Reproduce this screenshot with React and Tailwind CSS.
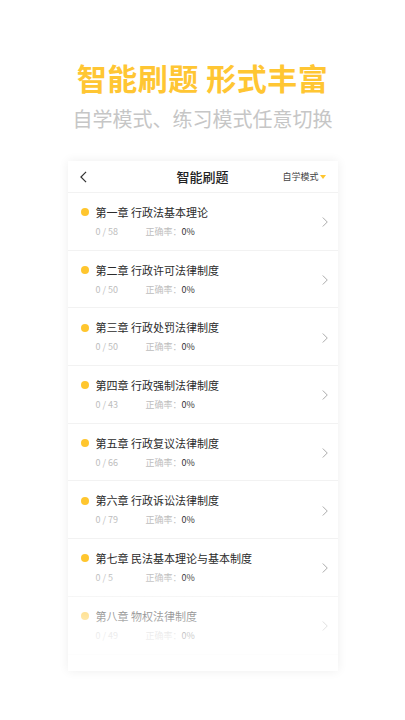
import React from 'react';

const chapters = [
    { name: '第一章 行政法基本理论', done: 0, total: 58 },
    { name: '第二章 行政许可法律制度', done: 0, total: 50 },
    { name: '第三章 行政处罚法律制度', done: 0, total: 50 },
    { name: '第四章 行政强制法律制度', done: 0, total: 43 },
    { name: '第五章 行政复议法律制度', done: 0, total: 66 },
    { name: '第六章 行政诉讼法律制度', done: 0, total: 79 },
    { name: '第七章 民法基本理论与基本制度', done: 0, total: 5 },
    { name: '第八章 物权法律制度', done: 0, total: 49 },
];

const font = { fontFamily: '"Noto Sans CJK SC", "Noto Sans", sans-serif' };

function Chevron({ className, width = 1.1 }) {
    return (
        <svg viewBox="0 0 8 14" className={className} fill="none" stroke="currentColor" strokeWidth={width}>
            <path d="M1 1l6 6-6 6" />
        </svg>
    );
}

function ChapterRow({ chapter }) {
    return (
        <div className="h-[57.7px] flex items-center border-b border-[#f2f2f2] pl-[13px] pr-[10px]">
            <div className="flex-1">
                <div className="flex items-center">
                    <span className="w-[8px] h-[8px] rounded-full bg-[#ffc62e] mr-[7px]" />
                    <span className="text-[11px] text-[#2b2b2b] leading-none">{chapter.name}</span>
                </div>
                <div className="flex items-center mt-[9px] pl-[15px] text-[9px] leading-none">
                    <span className="text-[#bdbdbd] w-[50px]">{chapter.done} / {chapter.total}</span>
                    <span className="text-[#bdbdbd]">正确率：</span>
                    <span className="text-[#333]">0%</span>
                </div>
            </div>
            <Chevron className="w-[6px] h-[12px] text-[#999] mt-[2px]" />
        </div>
    );
}

export default function App() {
    return (
        <div className="w-[405px] h-[720px] bg-white overflow-hidden" style={font}>
            {/* Headline */}
            <div className="pt-[62px] text-center">
                <h1 className="text-[30px] leading-none font-bold text-[#ffc633] tracking-[0.5px]">智能刷题 形式丰富</h1>
                <p className="mt-[17px] text-[20px] leading-none text-[#c6c6c6]">自学模式、练习模式任意切换</p>
            </div>

            {/* Phone card */}
            <div className="relative mx-auto mt-[32px] w-[270px] h-[510px] bg-white shadow-[0_0_10px_rgba(0,0,0,0.07)] overflow-hidden">
                <div className="h-[32px] flex items-center px-[12px] border-b border-[#f2f2f2] relative">
                    <Chevron className="w-[7px] h-[12px] text-[#333] rotate-180" width={1.4} />
                    <span className="absolute left-1/2 -translate-x-1/2 text-[13px] font-medium text-[#222]">智能刷题</span>
                    <div className="ml-auto flex items-center">
                        <span className="text-[9px] text-[#444]">自学模式</span>
                        <span className="ml-[1px] w-0 h-0 border-l-[3px] border-r-[3px] border-t-[4px] border-l-transparent border-r-transparent border-t-[#ffc62e]" />
                    </div>
                </div>
                {chapters.map((c) => (
                    <ChapterRow key={c.name} chapter={c} />
                ))}
                {/* bottom fade */}
                <div className="absolute left-0 right-0 bottom-0 h-[100px] bg-gradient-to-b from-white/0 via-white/60 to-white" />
            </div>
        </div>
    );
}
